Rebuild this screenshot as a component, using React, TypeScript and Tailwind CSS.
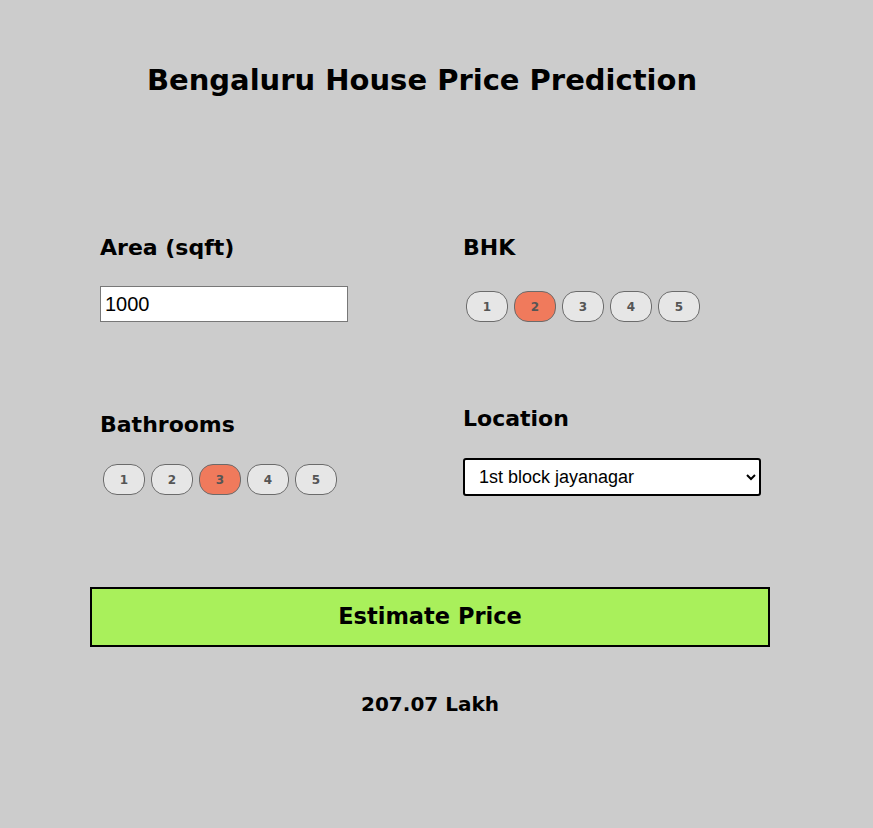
import React, { useState } from "react";

const heading = { fontFamily: '"DejaVu Sans", "Open Sans", sans-serif' };
const plain = { fontFamily: '"Liberation Sans", Arial, sans-serif' };

function Pills({ value, onChange }: { value: number; onChange: (n: number) => void }) {
  return (
    <div className="flex gap-[6px]">
      {[1, 2, 3, 4, 5].map((n) => (
        <button
          key={n}
          onClick={() => onChange(n)}
          style={heading}
          className={`h-[31px] w-[42px] rounded-[14px] border border-[#6b6b6b] text-[12px] font-bold text-[#555] ${
            value === n ? "bg-[#f07a5c]" : "bg-[#e6e6e6]"
          }`}
        >
          {n}
        </button>
      ))}
    </div>
  );
}

export default function App() {
  const [area, setArea] = useState("1000");
  const [bhk, setBhk] = useState(2);
  const [bath, setBath] = useState(3);
  const [location, setLocation] = useState("1st block jayanagar");

  return (
    <div className="min-h-[828px] w-full bg-[#cccccc] text-black">
      <div className="ml-[90px] w-[680px] pt-[60px]">
        <h1
          style={heading}
          className="pr-[16px] text-center text-[29px] font-bold leading-[40px]"
        >
          Bengaluru House Price Prediction
        </h1>

        <div className="mt-[134px] grid grid-cols-[363px_1fr] pl-[10px]">
          <div className="flex flex-col">
            <label style={heading} className="text-[22px] font-bold leading-7">
              Area (sqft)
            </label>
            <input
              value={area}
              onChange={(e) => setArea(e.target.value)}
              style={plain}
              className="mt-[24px] h-[36px] w-[248px] border border-[#777] bg-white px-[4px] text-[20px] outline-none"
            />
          </div>
          <div className="flex flex-col">
            <label style={heading} className="text-[22px] font-bold leading-7">
              BHK
            </label>
            <div className="mt-[29px] pl-[3px]">
              <Pills value={bhk} onChange={setBhk} />
            </div>
          </div>

          <div className="mt-[83px] flex flex-col pt-[6px]">
            <label style={heading} className="text-[22px] font-bold leading-7">
              Bathrooms
            </label>
            <div className="mt-[25px] pl-[3px]">
              <Pills value={bath} onChange={setBath} />
            </div>
          </div>
          <div className="mt-[83px] flex flex-col">
            <label style={heading} className="text-[22px] font-bold leading-7">
              Location
            </label>
            <select
              value={location}
              onChange={(e) => setLocation(e.target.value)}
              style={plain}
              className="mt-[25px] h-[38px] w-[298px] rounded-[3px] border-2 border-black bg-white px-[10px] text-[18px]"
            >
              <option>1st block jayanagar</option>
              <option>1st phase jp nagar</option>
              <option>2nd phase judicial layout</option>
              <option>whitefield</option>
            </select>
          </div>
        </div>

        <button
          style={heading}
          className="mt-[91px] h-[60px] w-[680px] border-2 border-black bg-[#a9f05b] text-[22.5px] font-bold"
        >
          Estimate Price
        </button>

        <div style={heading} className="mt-[43px] text-center text-[20px] font-bold leading-7">
          207.07 Lakh
        </div>
      </div>
    </div>
  );
}
